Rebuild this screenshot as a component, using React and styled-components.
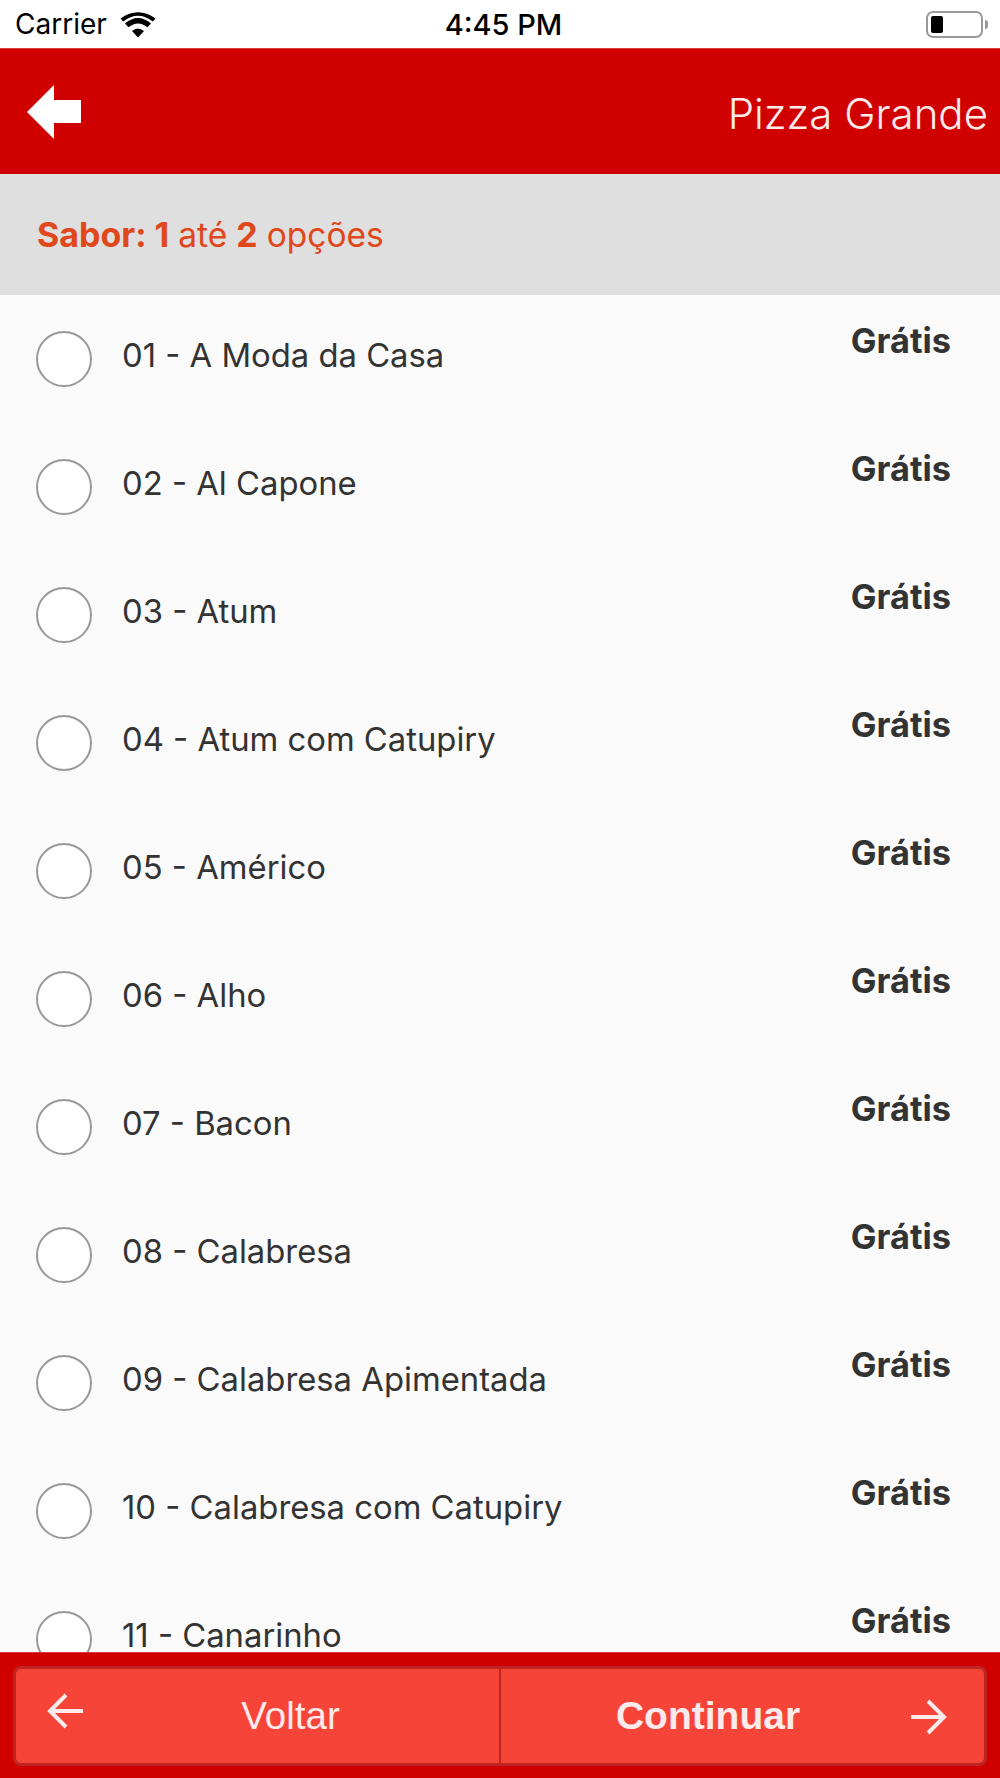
import React from 'react'
import styled, { createGlobalStyle } from 'styled-components'

const GlobalStyle = createGlobalStyle`
  html, body {
    margin: 0;
    padding: 0;
    height: 100%;
    background: #fafafa;
  }
  * {
    box-sizing: border-box;
  }
`

const items = [
  '01 - A Moda da Casa',
  '02 - Al Capone',
  '03 - Atum',
  '04 - Atum com Catupiry',
  '05 - Américo',
  '06 - Alho',
  '07 - Bacon',
  '08 - Calabresa',
  '09 - Calabresa Apimentada',
  '10 - Calabresa com Catupiry',
  '11 - Canarinho'
]

const App = () => {
  return (
    <Page>
      <GlobalStyle />
      <StatusBar>
        <StatusLeft>
          <span>Carrier</span>
          <svg width="36" height="25" viewBox="0 0 36 25">
            <path d="M18 24.5 L12 18 Q18 13 24 18 Z M8.5 14.3 L5 10.6 Q18 -0.5 31 10.6 L27.5 14.3 Q18 6.5 8.5 14.3 Z M3.2 8.6 L0.5 5.6 Q18 -7 35.5 5.6 L32.8 8.6 Q18 -3 3.2 8.6 Z" fill="#000" transform="translate(0 1)" />
          </svg>
        </StatusLeft>
        <StatusTime>4:45 PM</StatusTime>
        <Battery>
          <BatteryBody><BatteryLevel /></BatteryBody>
          <BatteryCap />
        </Battery>
      </StatusBar>
      <Header>
        <svg width="54" height="54" viewBox="0 0 54 54">
          <polygon points="0,27 27,0 27,15 54,15 54,38 27,38 27,54" fill="#fff" />
        </svg>
        <Title>Pizza Grande</Title>
      </Header>
      <SectionBar>
        <b>Sabor: 1</b> até <b>2</b> opções
      </SectionBar>
      <List>
        {items.map((item) => (
          <Row key={item}>
            <Radio />
            <RowName>{item}</RowName>
            <Price>Grátis</Price>
          </Row>
        ))}
      </List>
      <Footer>
        <FooterButtons>
          <FooterButton $side="left">
            <ArrowIcon $side="left" width="38" height="38" viewBox="0 0 38 38">
              <path d="M36 18 H3 M19 2 L3 18 L19 34" fill="none" stroke="#fdeaea" strokeWidth="4" />
            </ArrowIcon>
            <ButtonLabel>Voltar</ButtonLabel>
          </FooterButton>
          <FooterButton $side="right">
            <ButtonLabel $bold>Continuar</ButtonLabel>
            <ArrowIcon $side="right" width="38" height="38" viewBox="0 0 38 38">
              <path d="M2 19 H35 M19 3 L35 19 L19 35" fill="none" stroke="#fdeaea" strokeWidth="4" />
            </ArrowIcon>
          </FooterButton>
        </FooterButtons>
      </Footer>
    </Page>
  )
}

const Page = styled.div`
  height: 100vh;
  display: flex;
  flex-direction: column;
  overflow: hidden;
  font-family: Inter, "Liberation Sans", sans-serif;
`

const StatusBar = styled.div`
  height: 48px;
  flex: none;
  background: #fff;
  display: grid;
  grid-template-columns: 1fr auto 1fr;
  align-items: center;
  padding: 0 12px 0 15px;
  color: #000;
`

const StatusLeft = styled.div`
  display: flex;
  align-items: center;
  gap: 13px;
  font-size: 28px;
`

const StatusTime = styled.div`
  margin-left: 4px;
  font-size: 29px;
  font-weight: 500;
`

const Battery = styled.div`
  justify-self: end;
  display: flex;
  align-items: center;
  gap: 2px;
`

const BatteryBody = styled.div`
  width: 57px;
  height: 27px;
  border: 2px solid #999;
  border-radius: 7px;
  padding: 3px;
  display: flex;
`

const BatteryLevel = styled.div`
  width: 12px;
  background: #000;
  border-radius: 2px;
`

const BatteryCap = styled.div`
  width: 3px;
  height: 9px;
  background: #999;
  border-radius: 0 3px 3px 0;
`

const Header = styled.div`
  height: 126px;
  flex: none;
  background: #d10000;
  border-top: 1px solid #dc3c3c;
  display: flex;
  align-items: center;
  justify-content: space-between;
  padding: 0 12px 0 27px;
`

const Title = styled.div`
  margin-top: 3px;
  color: #fdeaea;
  font-size: 42px;
  font-weight: 300;
`

const SectionBar = styled.div`
  height: 121px;
  flex: none;
  background: #dfdfdf;
  color: #e0471a;
  font-size: 33.5px;
  display: flex;
  align-items: center;
  gap: 0.27em;
  padding-left: 37px;
  b {
    font-size: 34px;
    font-weight: 700;
  }
`

const List = styled.div`
  flex: 1;
  min-height: 0;
  overflow: hidden;
  background: #fafafa;
`

const Row = styled.div`
  height: 128px;
  display: flex;
  align-items: center;
  padding: 0 49px 0 36px;
  color: #333;
`

const Radio = styled.div`
  width: 56px;
  height: 56px;
  flex: none;
  background: #fff;
  border: 2px solid #999;
  border-radius: 50%;
`

const RowName = styled.div`
  flex: 1;
  margin: 0 0 8px 30px;
  font-size: 32.8px;
`

const Price = styled.div`
  align-self: flex-start;
  margin-top: 25px;
  font-size: 34.3px;
  font-weight: 700;
`

const Footer = styled.div`
  height: 126px;
  flex: none;
  background: #d10000;
  border-top: 1px solid #dc3c3c;
  padding: 13px 13px 12px;
`

const FooterButtons = styled.div`
  height: 100%;
  display: grid;
  grid-template-columns: 1fr 1fr;
`

const FooterButton = styled.div`
  display: flex;
  align-items: center;
  justify-content: space-between;
  background: #f64439;
  border: 3px solid #bc2523;
  border-radius: ${(p) => (p.$side === 'left' ? '8px 0 0 8px' : '0 8px 8px 0')};
  ${(p) => (p.$side === 'left'
    ? 'border-right: 1px solid #bc2523; padding-left: 31px;'
    : 'border-left: 1px solid #bc2523; padding-right: 37px;')}
`

const ArrowIcon = styled.svg`
  flex: none;
  margin-bottom: ${(p) => (p.$side === 'left' ? '8px' : '0')};
  margin-top: ${(p) => (p.$side === 'right' ? '2px' : '0')};
`

const ButtonLabel = styled.div`
  flex: 1;
  text-align: center;
  color: #fdeaea;
  font-size: ${(p) => (p.$bold ? '39px' : '38.5px')};
  font-weight: ${(p) => (p.$bold ? 700 : 400)};
  font-family: "Liberation Sans", Inter, sans-serif;
  margin: ${(p) => (p.$bold ? '0 0 0 6px' : '0 3px 0 0')};
`

export default App
